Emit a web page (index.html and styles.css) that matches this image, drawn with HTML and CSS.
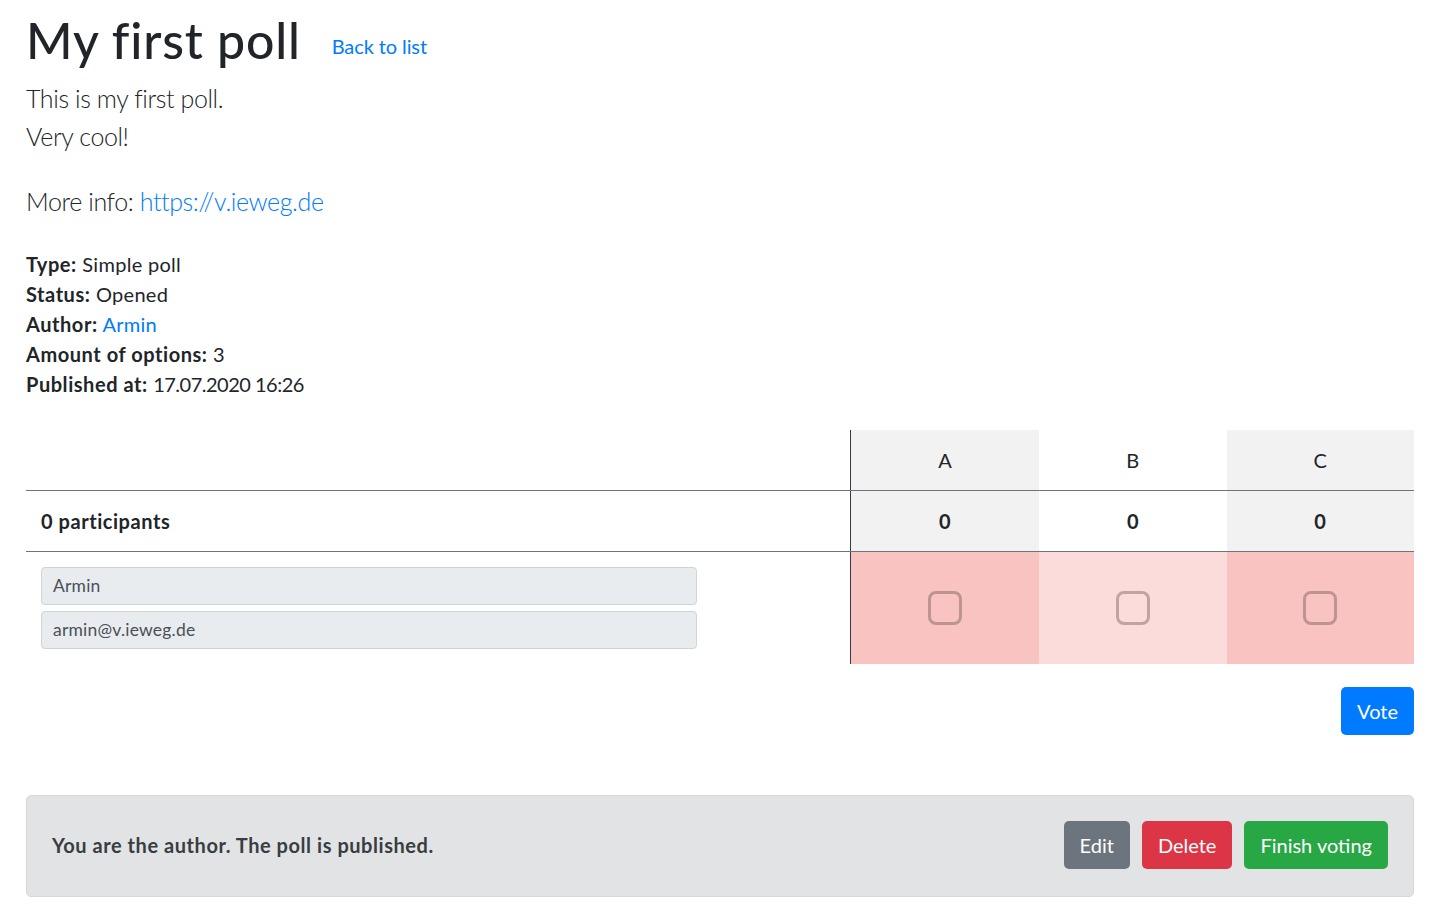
FILE: index.html
```html
<!DOCTYPE html>
<html lang="en">
<head>
    <meta charset="UTF-8">
    <meta name="viewport" content="width=device-width, initial-scale=1.0">
    <title>My first poll</title>
    <link rel="stylesheet" href="styles.css">
</head>
<body>
    <div class="container">
        <div class="poll-header">
            <h1>My first poll</h1>
            <a class="back-link" href="#">Back to list</a>
        </div>

        <p class="lead">This is my first poll.<br>Very cool!</p>
        <p class="lead">More info: <a href="#">https://v.ieweg.de</a></p>

        <div class="meta">
            <div><b>Type:</b> Simple poll</div>
            <div><b>Status:</b> Opened</div>
            <div><b>Author:</b> <a href="#">Armin</a></div>
            <div><b>Amount of options:</b> 3</div>
            <div><b>Published at:</b> <span class="date">17.07.2020 16:26</span></div>
        </div>

        <table class="poll-table">
            <tr class="head-row">
                <td class="first-col"></td>
                <td class="opt opt-first shade">A</td>
                <td class="opt">B</td>
                <td class="opt shade">C</td>
            </tr>
            <tr class="count-row">
                <td class="first-col"><b>0 participants</b></td>
                <td class="opt opt-first shade"><b>0</b></td>
                <td class="opt"><b>0</b></td>
                <td class="opt shade"><b>0</b></td>
            </tr>
            <tr class="vote-row">
                <td class="first-col">
                    <input class="form-control" type="text" value="Armin" readonly>
                    <input class="form-control" type="text" value="armin@v.ieweg.de" readonly>
                </td>
                <td class="opt opt-first no-dark"><span class="check"></span></td>
                <td class="opt no-light"><span class="check"></span></td>
                <td class="opt no-dark"><span class="check"></span></td>
            </tr>
        </table>

        <div class="vote-bar">
            <button class="btn btn-primary">Vote</button>
        </div>

        <div class="author-box">
            <b>You are the author. The poll is published.</b>
            <div class="actions">
                <button class="btn btn-secondary">Edit</button>
                <button class="btn btn-danger">Delete</button>
                <button class="btn btn-success">Finish voting</button>
            </div>
        </div>
    </div>
</body>
</html>
```

FILE: styles.css
```css
body {
    margin: 0;
    font-family: Lato, "Noto Sans", sans-serif;
    font-size: 20px;
    line-height: 1.5;
    letter-spacing: 0.3px;
    font-variant-ligatures: none;
    color: #212529;
    background: #fff;
}

a {
    color: #007bff;
    text-decoration: none;
}

b {
    font-weight: 700;
    letter-spacing: 0.55px;
}

.container {
    padding: 10px 22px 20px 26px;
}

.poll-header {
    display: flex;
    align-items: center;
    gap: 31px;
}

h1 {
    font-size: 50px;
    font-weight: 500;
    line-height: 1.2;
    letter-spacing: 0.8px;
    margin: 0 0 10px;
}

.back-link {
    font-size: 20px;
    letter-spacing: -0.1px;
    padding-top: 1px;
}

.lead {
    font-size: 25px;
    font-weight: 300;
    letter-spacing: -0.4px;
    margin: 0 0 28px;
}

.meta {
    margin-bottom: 31px;
}

.date {
    letter-spacing: -0.5px;
}

/* Tabelle */
.poll-table {
    width: 100%;
    border-collapse: collapse;
}

.poll-table td {
    padding: 0 15px;
    vertical-align: middle;
}

.first-col {
    width: 794px;
}

.head-row td {
    height: 60px;
    border-bottom: 1px solid #6c757d;
}

.count-row td {
    height: 60px;
    border-bottom: 1px solid #6c757d;
}

.vote-row td {
    height: 112px;
}

.opt {
    text-align: center;
}

.opt-first {
    border-left: 1px solid #343a40;
}

.shade {
    background: #f2f2f2;
}

.no-dark {
    background: #f9c3c2;
}

.no-light {
    background: #fbdcdb;
}

.check {
    display: inline-block;
    width: 28px;
    height: 28px;
    border: 3px solid rgba(80, 60, 60, 0.35);
    border-radius: 8px;
    vertical-align: middle;
}

.form-control {
    display: block;
    box-sizing: border-box;
    width: 656px;
    height: 38px;
    margin: 6px 0;
    padding: 0 11px;
    font-family: inherit;
    font-size: 17.5px;
    letter-spacing: 0.2px;
    color: #495057;
    background: #e9ecef;
    border: 1px solid #ced4da;
    border-radius: 4px;
}

/* Buttons */
.btn {
    font-family: inherit;
    font-size: 20px;
    line-height: 1.5;
    letter-spacing: 0;
    padding: 8px 15px;
    border: 1px solid transparent;
    border-radius: 5px;
    color: #fff;
    cursor: pointer;
}

.btn-primary { background: #007bff; }
.btn-secondary { background: #6c757d; }
.btn-danger { background: #dc3545; }
.btn-success { background: #28a745; }

.vote-bar {
    display: flex;
    justify-content: flex-end;
    margin-top: 23px;
    margin-bottom: 60px;
}

.author-box {
    display: flex;
    align-items: center;
    justify-content: space-between;
    padding: 25px 25px 27px;
    background: #e2e3e5;
    border: 1px solid #d6d8db;
    border-radius: 5px;
    color: #383d41;
}

.actions {
    display: flex;
    gap: 12px;
}
```
